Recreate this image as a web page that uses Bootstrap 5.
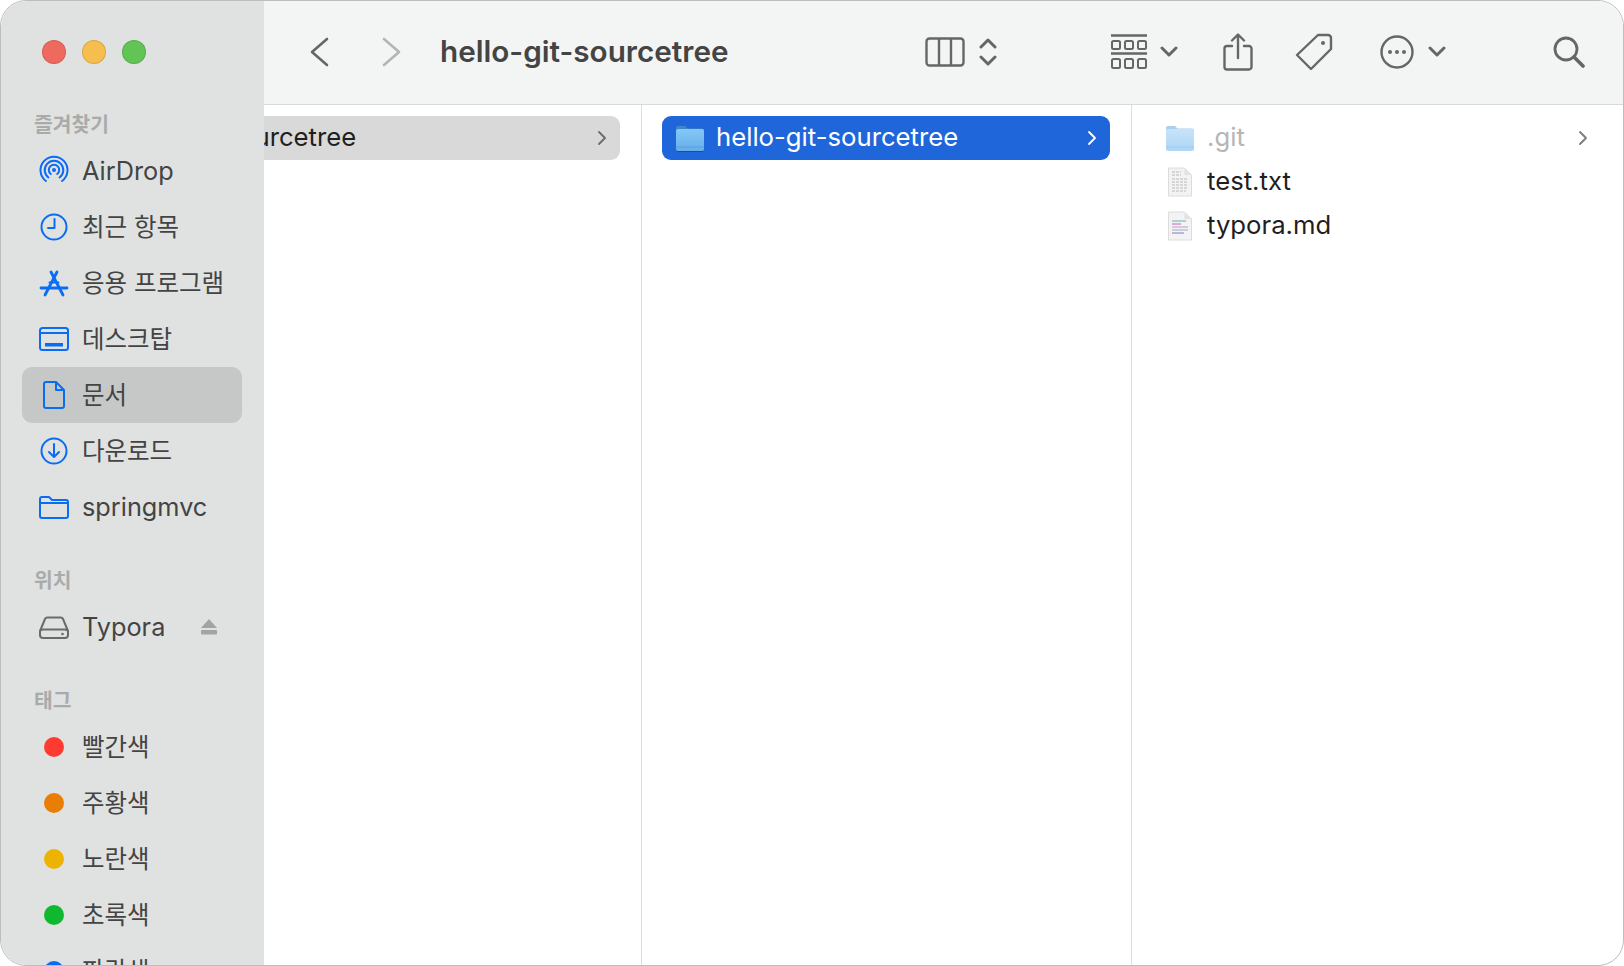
<!DOCTYPE html>
<html lang="ko">
<head>
  <meta charset="UTF-8" />
  <title>hello-git-sourcetree</title>
  <link href="https://cdn.jsdelivr.net/npm/bootstrap@5.3.3/dist/css/bootstrap.min.css" rel="stylesheet" />
  <style>
    html, body { height: 100%; background: #fff; overflow: hidden; }
    body { font-family: "Inter", "Noto Sans CJK KR", sans-serif; font-size: 25.7px; }

    .finder { width: 1624px; height: 966px; border-radius: 26px; overflow: hidden; border: 1px solid #bdbdbd; }

    /* sidebar */
    .side { width: 263px; background: #e0e2e1; color: #444; }
    .lights { height: 102px; padding-left: 41px; gap: 16px; }
    .light { width: 24px; height: 24px; border-radius: 50%; border: 1px solid rgba(0,0,0,.12); }
    .side-head { height: 28px; margin: 8px 0 4px 33px; font-size: 20.4px; font-weight: 700; color: #a9abaa; line-height: 28px; }
    .side-head.gap-before { margin-top: 32px; }
    .side-row { height: 56px; margin: 0 22px 0 21px; padding-left: 16px; border-radius: 10px; gap: 12px; line-height: 1; }
    .side-row.active { background: #c6c8c7; }
    .side-row svg { width: 32px; height: 32px; flex: none; }
    .side-row .eject-icon { width: 18px; height: 18px; margin-right: 24px; }
    .side-label { font-size: 25.3px; padding-bottom: 1px; }
    .ko-label { font-size: 24.5px; }
    .tag-slot { width: 32px; }
    .tag-dot { width: 20px; height: 20px; border-radius: 50%; }

    /* toolbar */
    .bar { height: 104px; padding-bottom: 2px; background: #f3f5f4; border-bottom: 1px solid #d9d9d9; color: #444; }
    .bar svg { flex: none; display: block; }
    .bar-title { font-size: 29.7px; font-weight: 600; margin-left: 38px; width: 300px; white-space: nowrap; }

    /* columns */
    .col-pane { padding-top: 11px; overflow: hidden; border-right: 1px solid #dedede; color: #1f1f1f; }
    .col-first { width: 378px; }
    .col-second { width: 490px; padding-left: 20px; padding-right: 21px; }
    .col-third { flex: 1; border-right: 0; padding-left: 20px; padding-right: 22px; }
    .file-row { height: 44px; border-radius: 9px; white-space: nowrap; line-height: 1; }
    .file-row .file-name { flex: 1; padding-bottom: 2px; }
    .file-row svg { flex: none; }
    .row-parent { background: #d9d9d9; margin-right: 21px; border-radius: 0 9px 9px 0; padding-right: 13px; }
    .row-parent .file-name { margin-left: -150px; }
    .row-open { background: #2066db; color: #fff; padding: 0 13px; gap: 11px; }
    .row-item { padding: 0 13px; gap: 12px; }
    .muted-name { color: #b6b6b6; }
  </style>
</head>
<body>

  <div class="finder d-flex">

    <!-- Sidebar -->
    <div class="side flex-shrink-0 overflow-hidden">
      <div class="lights d-flex align-items-center">
        <span class="light" style="background:#ee6a5e"></span>
        <span class="light" style="background:#f6bd4f"></span>
        <span class="light" style="background:#61c454"></span>
      </div>

      <div class="side-head">즐겨찾기</div>
      <div class="side-row d-flex align-items-center">
        <svg viewBox="0 0 32 32" fill="none" stroke="#0a6cf5" stroke-width="2" stroke-linecap="round">
          <path d="M8 26a13.5 13.5 0 1 1 16 0"/><path d="M10.4 22.5a9.3 9.3 0 1 1 11.2 0"/><path d="M12.8 19a5.2 5.2 0 1 1 6.4 0"/>
          <circle cx="16" cy="15" r="2" fill="#0a6cf5" stroke="none"/>
        </svg>
        <span class="side-label">AirDrop</span>
      </div>
      <div class="side-row d-flex align-items-center">
        <svg viewBox="0 0 32 32" fill="none" stroke="#0a6cf5" stroke-width="2" stroke-linecap="round" stroke-linejoin="round">
          <circle cx="16" cy="16" r="12.5"/><path d="M16.5 8v9H10"/>
        </svg>
        <span class="ko-label">최근 항목</span>
      </div>
      <div class="side-row d-flex align-items-center">
        <svg viewBox="0 0 32 32" fill="none" stroke="#0a6cf5" stroke-width="2.8" stroke-linecap="round" stroke-linejoin="round">
          <path d="M13 5l12 23"/><path d="M19 5L7 28"/><path d="M3 21h26"/><path d="M11.500 15.500h9" stroke-width="2"/>
        </svg>
        <span class="ko-label">응용 프로그램</span>
      </div>
      <div class="side-row d-flex align-items-center">
        <svg viewBox="0 0 32 32" fill="none" stroke="#0a6cf5" stroke-width="2">
          <rect x="2" y="5" width="28" height="22" rx="2.5"/><path d="M2 10h28"/>
          <rect x="7" y="20" width="18" height="3.5" fill="#0a6cf5" stroke="none"/>
        </svg>
        <span class="ko-label">데스크탑</span>
      </div>
      <div class="side-row active d-flex align-items-center">
        <svg viewBox="0 0 32 32" fill="none" stroke="#0a6cf5" stroke-width="2" stroke-linejoin="round">
          <path d="M8 3h10l8 8v16a2 2 0 0 1-2 2H8a2 2 0 0 1-2-2V5a2 2 0 0 1 2-2z"/><path d="M18 3v8h8"/>
        </svg>
        <span class="ko-label">문서</span>
      </div>
      <div class="side-row d-flex align-items-center">
        <svg viewBox="0 0 32 32" fill="none" stroke="#0a6cf5" stroke-width="2" stroke-linecap="round" stroke-linejoin="round">
          <circle cx="16" cy="16" r="12.5"/><path d="M16 9v13M11 17l5 5 5-5"/>
        </svg>
        <span class="ko-label">다운로드</span>
      </div>
      <div class="side-row d-flex align-items-center">
        <svg viewBox="0 0 32 32" fill="none" stroke="#0a6cf5" stroke-width="2" stroke-linejoin="round">
          <path d="M2 8a2 2 0 0 1 2-2h7l3 3h14a2 2 0 0 1 2 2v14a2 2 0 0 1-2 2H4a2 2 0 0 1-2-2z"/><path d="M2 12h28"/>
        </svg>
        <span class="side-label">springmvc</span>
      </div>

      <div class="side-head gap-before">위치</div>
      <div class="side-row d-flex align-items-center">
        <svg viewBox="0 0 32 32" fill="none" stroke="#6a6a6a" stroke-width="2" stroke-linejoin="round">
          <path d="M2 20l5-12a2.5 2.5 0 0 1 2.3-1.5h13.4A2.5 2.5 0 0 1 25 8l5 12v4a3 3 0 0 1-3 3H5a3 3 0 0 1-3-3z"/><path d="M2.5 19.5c1-1 2-1 3-1h21c1 0 2 0 3 1"/>
          <circle cx="24.5" cy="23" r="1.3" fill="#6a6a6a" stroke="none"/>
        </svg>
        <span class="side-label flex-grow-1">Typora</span>
        <svg class="eject-icon" viewBox="0 0 18 18" fill="#a3a3a3">
          <path d="M9 1l8 9H1z"/><rect x="1" y="12" width="16" height="4.5" rx="1"/>
        </svg>
      </div>

      <div class="side-head gap-before">태그</div>
      <div class="side-row d-flex align-items-center">
        <span class="tag-slot d-flex justify-content-center"><span class="tag-dot" style="background:#ff3a30"></span></span>
        <span class="ko-label">빨간색</span>
      </div>
      <div class="side-row d-flex align-items-center">
        <span class="tag-slot d-flex justify-content-center"><span class="tag-dot" style="background:#e87e04"></span></span>
        <span class="ko-label">주황색</span>
      </div>
      <div class="side-row d-flex align-items-center">
        <span class="tag-slot d-flex justify-content-center"><span class="tag-dot" style="background:#ecb401"></span></span>
        <span class="ko-label">노란색</span>
      </div>
      <div class="side-row d-flex align-items-center">
        <span class="tag-slot d-flex justify-content-center"><span class="tag-dot" style="background:#0fb92f"></span></span>
        <span class="ko-label">초록색</span>
      </div>
      <div class="side-row d-flex align-items-center">
        <span class="tag-slot d-flex justify-content-center"><span class="tag-dot" style="background:#0a6cf5"></span></span>
        <span class="ko-label">파란색</span>
      </div>
    </div>

    <!-- Main -->
    <div class="flex-grow-1 d-flex flex-column overflow-hidden">

      <div class="bar d-flex align-items-center flex-shrink-0">
        <svg style="margin-left:46px" width="20" height="30" viewBox="0 0 20 30" fill="none" stroke="#666" stroke-width="2.6" stroke-linecap="round" stroke-linejoin="round"><path d="M17 2L2 15l15 13"/></svg>
        <svg style="margin-left:52px" width="20" height="30" viewBox="0 0 20 30" fill="none" stroke="#b4b4b4" stroke-width="2.6" stroke-linecap="round" stroke-linejoin="round"><path d="M2 2l15 13L2 28"/></svg>
        <div class="bar-title">hello-git-sourcetree</div>

        <svg style="margin-left:185px" width="40" height="30" viewBox="0 0 40 30" fill="none" stroke="#666" stroke-width="2.4"><rect x="1.5" y="1.5" width="37" height="27" rx="3"/><path d="M14 1.5v27M26 1.5v27"/></svg>
        <svg style="margin-left:14px" width="18" height="28" viewBox="0 0 18 28" fill="none" stroke="#666" stroke-width="3" stroke-linecap="round" stroke-linejoin="round"><path d="M2 9l7-7 7 7M2 19l7 7 7-7"/></svg>

        <svg style="margin-left:113px" width="38" height="36" viewBox="0 0 38 36" fill="none" stroke="#666" stroke-width="2"><path d="M1 1.5h36M1 19.5h36" stroke-width="2.6"/><rect x="2" y="7" width="8" height="8" rx="1.5"/><rect x="15" y="7" width="8" height="8" rx="1.5"/><rect x="28" y="7" width="8" height="8" rx="1.5"/><rect x="2" y="25" width="8" height="9" rx="1.5"/><rect x="15" y="25" width="8" height="9" rx="1.5"/><rect x="28" y="25" width="8" height="9" rx="1.5"/></svg>
        <svg style="margin-left:12px" width="18" height="12" viewBox="0 0 18 12" fill="none" stroke="#666" stroke-width="3" stroke-linecap="round" stroke-linejoin="round"><path d="M2 2l7 7 7-7"/></svg>

        <svg style="margin-left:45px" width="30" height="38" viewBox="0 0 30 38" fill="none" stroke="#666" stroke-width="2.4" stroke-linecap="round" stroke-linejoin="round"><path d="M9 13H4a2.5 2.5 0 0 0-2.5 2.500V34A2.500 2.500 0 0 0 4 36.500h22a2.500 2.500 0 0 0 2.500-2.500V15.500A2.500 2.500 0 0 0 26 13h-5"/><path d="M15 25V2M9 7.500L15 1.500l6 6"/></svg>
        <svg style="margin-left:42px" width="38" height="38" viewBox="0 0 38 38" fill="none" stroke="#666" stroke-width="2.4" stroke-linejoin="round"><path d="M23 2h10a3 3 0 0 1 3 3v11L16 36 2 22z"/><circle cx="28" cy="10" r="2" fill="#666" stroke="none"/></svg>

        <svg style="margin-left:47px" width="34" height="34" viewBox="0 0 34 34" fill="none" stroke="#666" stroke-width="2.400"><circle cx="17" cy="17" r="15.500"/><g fill="#666" stroke="none"><circle cx="10" cy="17" r="2"/><circle cx="17" cy="17" r="2"/><circle cx="24" cy="17" r="2"/></g></svg>
        <svg style="margin-left:14px" width="18" height="12" viewBox="0 0 18 12" fill="none" stroke="#666" stroke-width="3" stroke-linecap="round" stroke-linejoin="round"><path d="M2 2l7 7 7-7"/></svg>

        <svg style="margin-left:107px" width="32" height="32" viewBox="0 0 32 32" fill="none" stroke="#666" stroke-width="2.800" stroke-linecap="round"><circle cx="13" cy="13" r="11"/><path d="M21 21l9 9" stroke-width="3.600"/></svg>
      </div>

      <div class="d-flex flex-grow-1 overflow-hidden">

        <!-- parent column -->
        <div class="col-pane col-first flex-shrink-0">
          <div class="file-row row-parent d-flex align-items-center">
            <span class="file-name">hello-git-sourcetree</span>
            <svg width="10" height="16" viewBox="0 0 10 16" fill="none" stroke="#6b6b6b" stroke-width="1.800" stroke-linecap="round" stroke-linejoin="round"><path d="M2 2l6 6-6 6"/></svg>
          </div>
        </div>

        <!-- repo column -->
        <div class="col-pane col-second flex-shrink-0">
          <div class="file-row row-open d-flex align-items-center">
            <svg width="30" height="30" viewBox="0 0 30 30"><defs><linearGradient id="folderOpen" x1="0" y1="0" x2="0" y2="1"><stop offset="0" stop-color="#85c8f7"/><stop offset="1" stop-color="#65aeea"/></linearGradient></defs><path d="M1 5a2 2 0 0 1 2-2h7l2.500 2.500H27a2 2 0 0 1 2 2V9H1z" fill="#3f86cc"/><rect x="1" y="6" width="28" height="22" rx="2" fill="url(#folderOpen)"/><path d="M1 24h28" stroke="#5a9fdc" stroke-width="1"/><path d="M2 28.500h26" stroke="#1a4f9e" stroke-width="1"/></svg>
            <span class="file-name">hello-git-sourcetree</span>
            <svg width="10" height="16" viewBox="0 0 10 16" fill="none" stroke="#fff" stroke-width="1.800" stroke-linecap="round" stroke-linejoin="round"><path d="M2 2l6 6-6 6"/></svg>
          </div>
        </div>

        <!-- file column -->
        <div class="col-pane col-third">
          <div class="file-row row-item d-flex align-items-center">
            <svg width="30" height="30" viewBox="0 0 30 30"><defs><linearGradient id="folderHidden" x1="0" y1="0" x2="0" y2="1"><stop offset="0" stop-color="#c7e3f9"/><stop offset="1" stop-color="#aed6f5"/></linearGradient></defs><path d="M1 5a2 2 0 0 1 2-2h7l2.500 2.500H27a2 2 0 0 1 2 2V9H1z" fill="#a9d0f0"/><rect x="1" y="6" width="28" height="22" rx="2" fill="url(#folderHidden)"/><path d="M1 24h28" stroke="#a0cbee" stroke-width="1"/></svg>
            <span class="file-name muted-name">.git</span>
            <svg width="10" height="16" viewBox="0 0 10 16" fill="none" stroke="#7a7a7a" stroke-width="1.800" stroke-linecap="round" stroke-linejoin="round"><path d="M2 2l6 6-6 6"/></svg>
          </div>
          <div class="file-row row-item d-flex align-items-center">
            <svg width="30" height="30" viewBox="0 0 30 30"><path d="M3.500 1h16l7 7v21h-23z" fill="#f3f3f3" stroke="#dcdcdc"/><path d="M19.500 1v7h7z" fill="#e2e2e2"/><path d="M7 5h9M7 8h9M7 12h16M7 15h16M7 18h16M7 21h16M7 24h14" stroke="#b9b9b9" stroke-width="1.200" stroke-dasharray="3 1"/></svg>
            <span class="file-name">test.txt</span>
          </div>
          <div class="file-row row-item d-flex align-items-center">
            <svg width="30" height="30" viewBox="0 0 30 30"><path d="M3.500 1h16l7 7v21h-23z" fill="#f3f3f3" stroke="#dcdcdc"/><path d="M19.500 1v7h7z" fill="#e2e2e2"/><path d="M7 10h14" stroke="#6aa9c9" stroke-width="1.200"/><path d="M7 13h9" stroke="#d65bb0" stroke-width="1.200"/><path d="M7 16h16M7 19h16" stroke="#a7a7c9" stroke-width="1.200"/><path d="M7 22h12" stroke="#7d7dd0" stroke-width="1.200"/></svg>
            <span class="file-name">typora.md</span>
          </div>
        </div>

      </div>
    </div>
  </div>

  <script src="https://cdn.jsdelivr.net/npm/bootstrap@5.3.3/dist/js/bootstrap.bundle.min.js"></script>
</body>
</html>
